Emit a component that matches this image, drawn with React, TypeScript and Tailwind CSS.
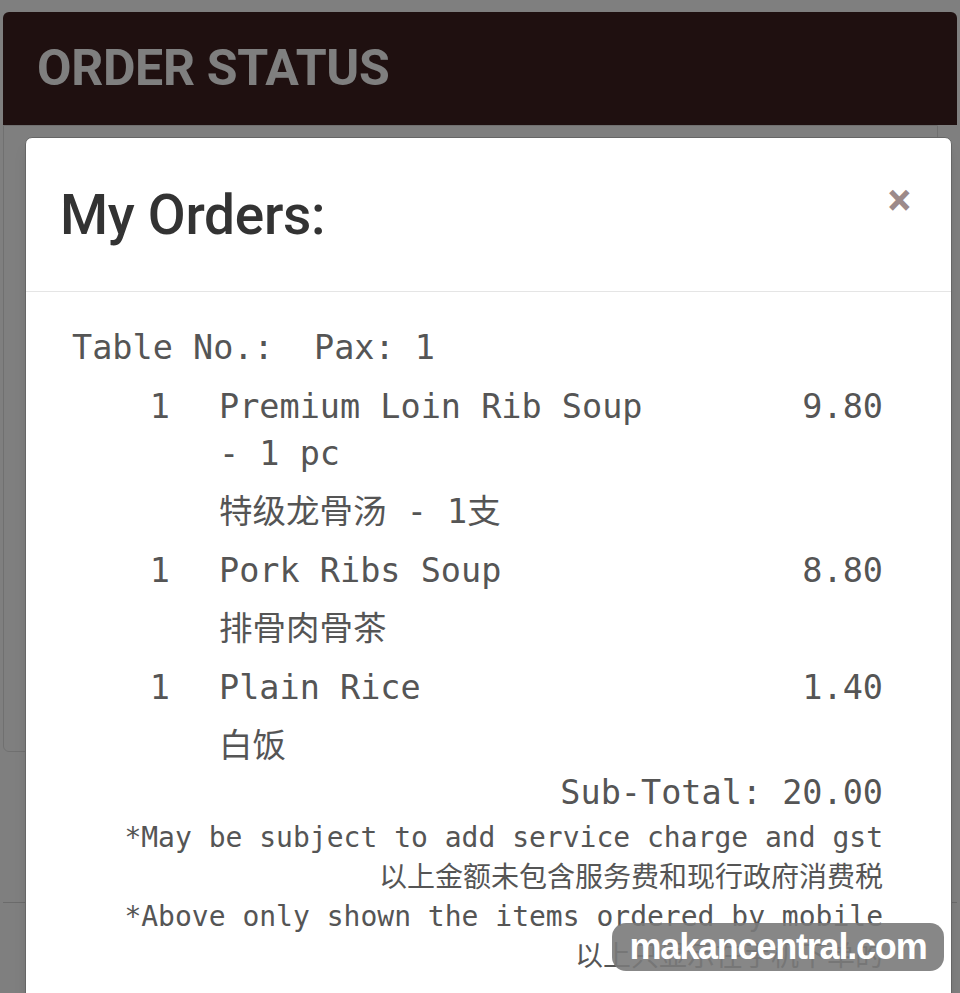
import React from 'react';

type Item = {
  qty: number;
  name: string;
  cn: string;
  price: string;
};

const items: Item[] = [
  { qty: 1, name: 'Premium Loin Rib Soup - 1 pc', cn: '特级龙骨汤 - 1支', price: '9.80' },
  { qty: 1, name: 'Pork Ribs Soup', cn: '排骨肉骨茶', price: '8.80' },
  { qty: 1, name: 'Plain Rice', cn: '白饭', price: '1.40' },
];

const mono = "font-['DejaVu_Sans_Mono','Noto_Sans_CJK_SC',monospace]";

export default function App() {
  return (
    <div className="relative h-[993px] w-[960px] overflow-hidden bg-white font-['Roboto','Noto_Sans_CJK_SC',sans-serif]">
      {/* page behind the dialog */}
      <div className="px-[3px] pt-[12px]">
        <div className="flex h-[113px] items-center rounded-t-[6px] bg-[#3e2121] pl-[34px]">
          <h1 className="text-[50px] font-bold tracking-[-0.3px] text-white">ORDER STATUS</h1>
        </div>
        <div className="h-[627px] w-[935px] rounded-b-[6px] border border-[#e0e0e0] bg-white" />
        <div className="mt-[150px] border-t border-[#d6d6d6]" />
      </div>

      {/* backdrop */}
      <div className="absolute inset-0 bg-black/50" />

      {/* dialog */}
      <div className="absolute left-[25px] top-[137px] w-[927px] rounded-[7px] border border-[#666] bg-white shadow-lg">
        <div className="flex h-[154px] items-center justify-between border-b border-[#e5e5e5] pl-[34px] pr-[40px]">
          <h2 className="pt-[2px] text-[55px] font-medium tracking-[-0.3px] text-[#333]">My Orders:</h2>
          <span className="-mt-[30px] text-[44px] font-bold leading-none text-[#9c8a8a]">×</span>
        </div>

        <div className={`${mono} pb-[40px] pl-[46px] pr-[68px] pt-[32px] text-[#555]`}>
          <div className="text-[33.5px] leading-[47px]">Table No.:&nbsp; Pax: 1</div>

          {items.map((item, i) => (
            <div key={i} className="text-[33.5px] leading-[47px]">
              <div className="mt-[11.5px] grid grid-cols-[98px_489px_1fr]">
                <span className="text-right">{item.qty}</span>
                <span className="ml-[49px]">{item.name}</span>
                <span className="text-right">{item.price}</span>
              </div>
              <div className="mt-[11.5px] pl-[147px]">{item.cn}</div>
            </div>
          ))}

          <div className="text-right text-[33.5px] leading-[47px]">Sub-Total: 20.00</div>
          <div className="mt-[2px] text-right text-[28px] leading-[39.5px]">
            <div>*May be subject to add service charge and gst</div>
            <div>以上金额未包含服务费和现行政府消费税</div>
            <div>*Above only shown the items ordered by mobile</div>
            <div>以上只显示在手机下单的</div>
          </div>
        </div>
      </div>

      {/* watermark */}
      <div className="absolute left-[612px] top-[923px] flex h-[48px] w-[332px] items-center justify-center rounded-[14px] bg-[#7a7a7a]/90">
        <span className="font-['Liberation_Sans',sans-serif] text-[36px] font-bold tracking-[-1.2px] text-white">makancentral.com</span>
      </div>
    </div>
  );
}
